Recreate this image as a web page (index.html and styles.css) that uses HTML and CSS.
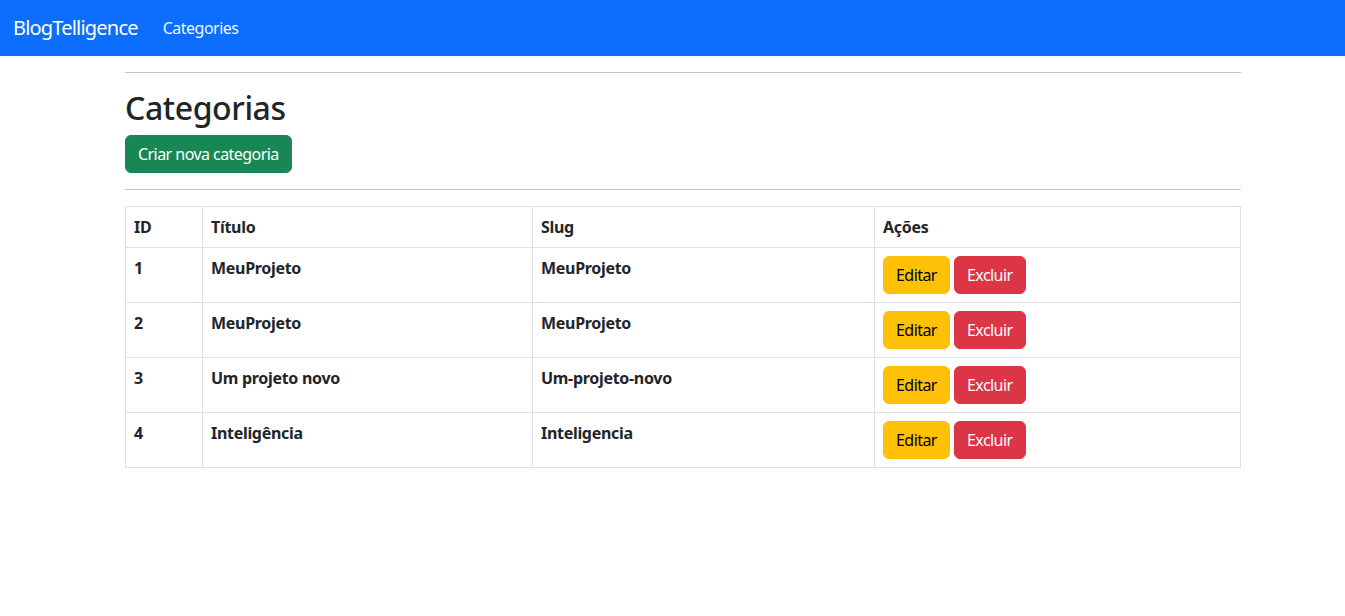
FILE: index.html
```html
<!DOCTYPE html>
<html lang="pt-BR">
<head>
<meta charset="utf-8">
<title>Categorias - BlogTelligence</title>
<link rel="stylesheet" href="styles.css">
</head>
<body>
<nav class="navbar">
  <a class="brand" href="#">BlogTelligence</a>
  <a class="nav-link" href="#">Categories</a>
</nav>
<main class="page">
  <hr class="rule">
  <h2 class="title">Categorias</h2>
  <a class="btn btn-success" href="#">Criar nova categoria</a>
  <hr class="rule">
  <table class="table">
    <colgroup>
      <col class="c-id"><col class="c-title"><col class="c-slug"><col class="c-actions">
    </colgroup>
    <thead>
      <tr><th>ID</th><th>Título</th><th>Slug</th><th>Ações</th></tr>
    </thead>
    <tbody>
      <tr><th>1</th><th>MeuProjeto</th><th>MeuProjeto</th><td><div class="actions"><a class="btn btn-warning" href="#">Editar</a><a class="btn btn-danger" href="#">Excluir</a></div></td></tr>
      <tr><th>2</th><th>MeuProjeto</th><th>MeuProjeto</th><td><div class="actions"><a class="btn btn-warning" href="#">Editar</a><a class="btn btn-danger" href="#">Excluir</a></div></td></tr>
      <tr><th>3</th><th>Um projeto novo</th><th>Um-projeto-novo</th><td><div class="actions"><a class="btn btn-warning" href="#">Editar</a><a class="btn btn-danger" href="#">Excluir</a></div></td></tr>
      <tr><th>4</th><th>Inteligência</th><th>Inteligencia</th><td><div class="actions"><a class="btn btn-warning" href="#">Editar</a><a class="btn btn-danger" href="#">Excluir</a></div></td></tr>
    </tbody>
  </table>
</main>
</body>
</html>
```
FILE: styles.css
```css
* { box-sizing: border-box; }
html, body { margin: 0; }
body {
  font-family: "Noto Sans", "Open Sans", sans-serif;
  font-size: 16px;
  line-height: 1.5;
  color: #212529;
  background: #fff;
}
a { text-decoration: none; }

.navbar {
  background: #0d6efd;
  height: 56px;
  display: flex;
  align-items: center;
  padding: 0 12px 0 13px;
}
.brand {
  color: #fff;
  font-size: 20px;
  line-height: 30px;
  margin-right: 25px;
  letter-spacing: -0.8px;
}
.nav-link {
  color: rgba(255,255,255,0.95);
  font-size: 16px;
  letter-spacing: -0.5px;
}

.page {
  width: 1116px;
  margin-left: 125px;
}
.rule {
  margin: 16px 0;
  border: 0;
  border-top: 1px solid #c6c7c9;
  height: 0;
}
.title {
  margin: 0 0 8px;
  font-size: 32px;
  font-weight: 500;
  line-height: 1.2;
  letter-spacing: -0.4px;
}
.btn {
  display: inline-block;
  padding: 6px 12px;
  font-size: 16px;
  font-weight: 400;
  line-height: 24px;
  border: 1px solid transparent;
  border-radius: 6px;
  letter-spacing: -0.55px;
}
.btn-success { background: #198754; border-color: #198754; color: #fff; }
.btn-warning { background: #ffc107; border-color: #ffc107; color: #000; }
.btn-danger { background: #dc3545; border-color: #dc3545; color: #fff; }

.table {
  width: 1115px;
  border-collapse: collapse;
  table-layout: fixed;
  margin-top: 16px;
  vertical-align: top;
}
.c-id { width: 77px; }
.c-title { width: 330px; }
.c-slug { width: 342px; }
.c-actions { width: 366px; }
.table th, .table td {
  border: 1px solid #dee2e6;
  padding: 8px;
  text-align: left;
  vertical-align: top;
  font-weight: 700;
  letter-spacing: -0.3px;
}
.table thead th { vertical-align: bottom; }
.actions { display: flex; gap: 4px; }
```
